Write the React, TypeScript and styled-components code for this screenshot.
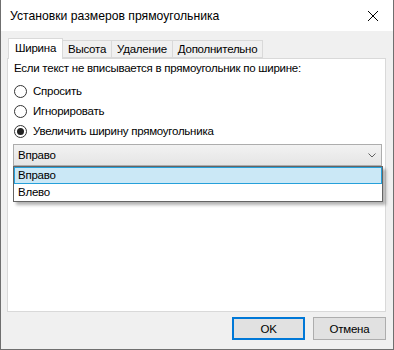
import styled, { createGlobalStyle } from 'styled-components'

const GlobalStyle = createGlobalStyle`
    html, body {
        margin: 0;
        padding: 0;
        background: #f0f0f0;
    }
    body {
        font-family: 'Liberation Sans', Arial, sans-serif;
        font-size: 11.5px;
        letter-spacing: -0.25px;
        color: #000;
    }
    * {
        box-sizing: border-box;
    }
`

const Window = styled.div`
    width: 394px;
    height: 350px;
    display: flex;
    flex-direction: column;
    background: #f0f0f0;
    border: 1px solid #6f6f6f;
    border-top: none;
`
const TitleBar = styled.div`
    height: 31px;
    flex-shrink: 0;
    background: #fff;
    display: flex;
    align-items: center;
    justify-content: space-between;
    padding: 0 8px 0 9px;
    font-size: 12.2px;
    letter-spacing: 0;
`
const CloseBtn = styled.div`
    width: 30px;
    height: 30px;
    display: flex;
    align-items: center;
    justify-content: center;
    margin-right: -3px;
`
const Body = styled.div`
    flex: 1;
    display: flex;
    flex-direction: column;
    padding: 7px 7px 9px 6px;
`
const Tabs = styled.div`
    display: flex;
    align-items: flex-end;
    height: 20px;
    padding-left: 1px;
    position: relative;
    z-index: 1;
`
const Tab = styled.div<{ $active?: boolean }>`
    height: ${(p) => (p.$active ? 21 : 18)}px;
    margin-bottom: ${(p) => (p.$active ? -1 : 0)}px;
    padding: 0 ${(p) => (p.$active ? 6 : 5)}px ${(p) => (p.$active ? 2 : 0)}px;
    display: flex;
    align-items: center;
    background: ${(p) => (p.$active ? '#fff' : '#f0f0f0')};
    border: 1px solid #d9d9d9;
    border-bottom: ${(p) => (p.$active ? 'none' : '1px solid #d9d9d9')};
    margin-left: ${(p) => (p.$active ? 0 : -1)}px;
    &:first-child {
        margin-left: 0;
    }
`
const Panel = styled.div`
    flex: 1;
    background: #fff;
    border: 1px solid #d9d9d9;
    padding: 1px 3px 0 5px;
    display: flex;
    flex-direction: column;
`
const Label = styled.div`
    line-height: 16px;
    padding-left: 1px;
    margin-bottom: 5px;
`
const RadioRow = styled.label`
    height: 20px;
    display: flex;
    align-items: center;
    gap: 6px;
    padding-left: 1px;
`
const RadioCircle = styled.span<{ $checked?: boolean }>`
    width: 13px;
    height: 13px;
    border-radius: 50%;
    border: 1px solid #333;
    background: #fff;
    display: flex;
    align-items: center;
    justify-content: center;
    &::after {
        content: '';
        width: 7px;
        height: 7px;
        border-radius: 50%;
        background: ${(p) => (p.$checked ? '#222' : 'transparent')};
    }
`
const ComboWrap = styled.div`
    position: relative;
    margin-top: 3px;
`
const Combo = styled.div`
    height: 22px;
    border: 1px solid #adadad;
    background: linear-gradient(#f2f2f2, #e5e5e5);
    display: flex;
    align-items: center;
    justify-content: space-between;
    padding: 0 5px 0 4px;
`
const DropList = styled.div`
    position: absolute;
    top: 100%;
    left: 0;
    right: -1px;
    background: #fff;
    border: 1px solid #646464;
    box-shadow: 3px 3px 3px rgba(0, 0, 0, 0.3);
`
const Option = styled.div<{ $selected?: boolean }>`
    height: 17px;
    line-height: 15px;
    padding-left: 3px;
    border: 1px solid ${(p) => (p.$selected ? '#26a0da' : 'transparent')};
    background: ${(p) => (p.$selected ? '#cbe8f6' : '#fff')};
`
const Footer = styled.div`
    display: flex;
    justify-content: flex-end;
    gap: 8px;
    padding-top: 5px;
`
const Button = styled.div<{ $default?: boolean }>`
    width: 73px;
    height: 23px;
    display: flex;
    align-items: center;
    justify-content: center;
    background: #e1e1e1;
    border: ${(p) => (p.$default ? '2px solid #0078d7' : '1px solid #adadad')};
`

const radios = [
    { label: 'Спросить', checked: false },
    { label: 'Игнорировать', checked: false },
    { label: 'Увеличить ширину прямоугольника', checked: true },
]

export default function App() {
    return (
        <>
            <GlobalStyle />
            <Window>
                <TitleBar>
                    <span>Установки размеров прямоугольника</span>
                    <CloseBtn>
                        <svg width="12" height="12" viewBox="0 0 12 12">
                            <path d="M1 1 L11 11 M11 1 L1 11" stroke="#000" strokeWidth="1" />
                        </svg>
                    </CloseBtn>
                </TitleBar>
                <Body>
                    <Tabs>
                        <Tab $active>Ширина</Tab>
                        <Tab>Высота</Tab>
                        <Tab>Удаление</Tab>
                        <Tab>Дополнительно</Tab>
                    </Tabs>
                    <Panel>
                        <Label>Если текст не вписывается в прямоугольник по ширине:</Label>
                        {radios.map((r) => (
                            <RadioRow key={r.label}>
                                <RadioCircle $checked={r.checked} />
                                {r.label}
                            </RadioRow>
                        ))}
                        <ComboWrap>
                            <Combo>
                                <span>Вправо</span>
                                <svg width="8" height="5" viewBox="0 0 8 5">
                                    <path d="M0.5 0.5 L4 4 L7.5 0.5" stroke="#606060" fill="none" />
                                </svg>
                            </Combo>
                            <DropList>
                                <Option $selected>Вправо</Option>
                                <Option>Влево</Option>
                            </DropList>
                        </ComboWrap>
                    </Panel>
                    <Footer>
                        <Button $default>OK</Button>
                        <Button>Отмена</Button>
                    </Footer>
                </Body>
            </Window>
        </>
    )
}
